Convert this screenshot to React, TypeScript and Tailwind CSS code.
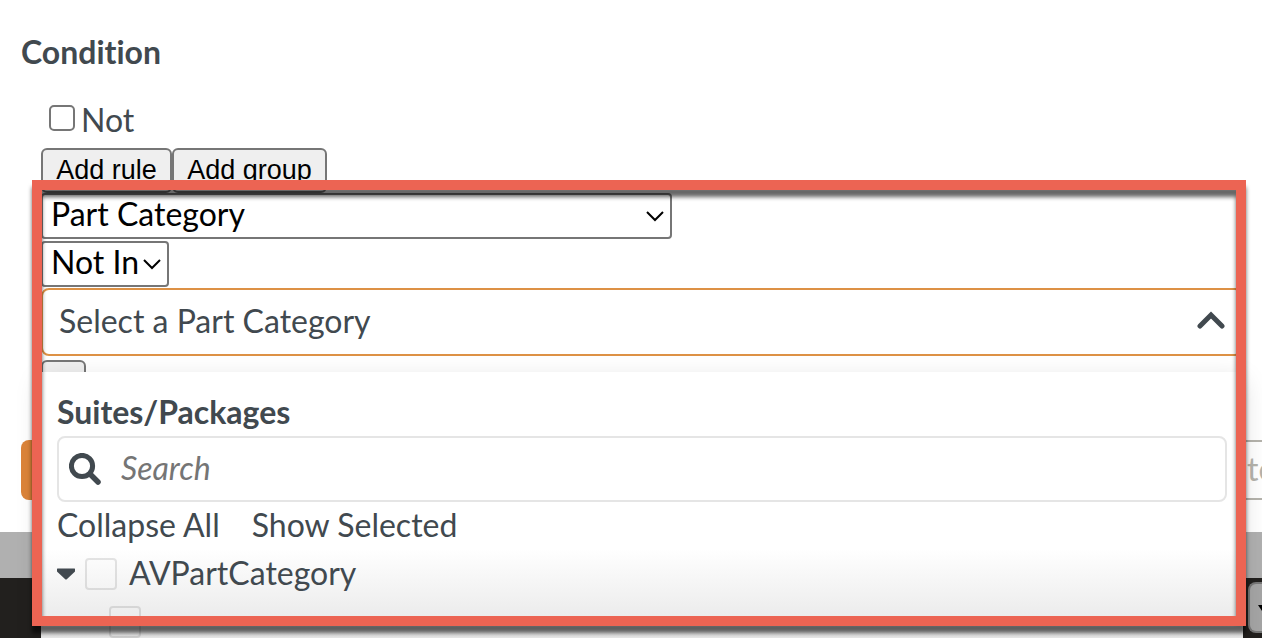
import { useState } from "react";

const categories = ["Part Category", "Part Number", "Manufacturer"];
const operators = ["Not In", "In"];

const Arrow = () => (
  <svg
    className="absolute right-[7px] top-[15px] w-5 h-4 pointer-events-none"
    viewBox="0 0 20 16"
    fill="none"
    stroke="black"
    strokeWidth="2"
  >
    <path d="M2 4 10 12 18 4" />
  </svg>
);

type SelectProps = {
  label: string;
  options: string[];
  className: string;
};

const RuleSelect = ({ label, options, className }: SelectProps) => {
  return (
    <div className={`relative ${className}`}>
      <select
        aria-label={label}
        className="block w-full h-[46px] pl-2 pb-1 leading-9 appearance-none rounded-sm border-2 border-[#767676] bg-white text-black"
      >
        {options.map((option) => (
          <option key={option}>{option}</option>
        ))}
      </select>
      <Arrow />
    </div>
  );
};

const TreeCheckbox = ({ label }: { label: string }) => (
  <input
    type="checkbox"
    aria-label={label}
    className="w-8 h-8 shrink-0 appearance-none rounded-sm border-2 border-black/10 checked:bg-gray-500"
  />
);

const CategoryPanel = () => {
  const [search, setSearch] = useState("");

  return (
    <div className="absolute inset-x-0 top-[84px] h-[272px] px-4 pt-5 bg-linear-to-b from-white from-65% to-[#e4e4e4] shadow-[0_8px_24px_rgba(0,0,0,0.15)]">
      <h3 className="font-bold leading-10">Suites/Packages</h3>
      <label className="flex items-center gap-5 h-[66px] mt-1 px-[10px] rounded-lg border-2 border-[#e5e5e5] bg-white">
        <svg className="w-8 h-8 shrink-0" viewBox="0 0 32 32" fill="none">
          <circle cx="13" cy="13" r="10.6" stroke="#41494f" strokeWidth="5" />
          <path
            d="M21.5 21.5 29 29"
            stroke="#41494f"
            strokeWidth="5.5"
            strokeLinecap="round"
          />
        </svg>
        <input
          type="text"
          aria-label="Search"
          placeholder="Search"
          value={search}
          onChange={(e) => setSearch(e.target.value)}
          className="grow pb-[2px] bg-transparent italic outline-none placeholder:text-[#757575]"
        />
      </label>
      <div className="flex items-start gap-8 h-12 leading-[46px]">
        <button>Collapse All</button>
        <button>Show Selected</button>
      </div>
      {/* TREE */}
      <div className="flex items-center h-12">
        <button aria-label="Toggle AVPartCategory" className="w-7">
          <svg className="w-[18px] h-3" viewBox="0 0 18 12">
            <path d="M0 1Q0 .5 .5 .5H17.5Q18 .5 18 1V3.5L9.8 11.2Q9 11.9 8.2 11.2L0 3.5Z" fill="#41494f" />
          </svg>
        </button>
        <TreeCheckbox label="AVPartCategory" />
        <span className="ml-3 pb-[2px]">AVPartCategory</span>
      </div>
      <div className="flex items-center h-12 pl-[52px]">
        <TreeCheckbox label="Subcategory" />
      </div>
    </div>
  );
};

export default function App() {
  return (
    <div className="relative flex flex-col h-screen overflow-hidden bg-[#b0b0b0] font-['Lato',sans-serif] text-[32px] text-[#41494f] [font-variant-ligatures:none]">
      {/* DIALOG */}
      <div className="h-[532px] shrink-0 pt-8 bg-white">
        <h2 className="px-[21px] font-bold leading-10">Condition</h2>
        <div className="relative z-10 pl-[41px] pr-[19px] mt-6">
          <label className="flex items-center gap-[6px] h-12 pl-2 mb-1 leading-10">
            <input
              type="checkbox"
              className="w-[26px] h-[26px] mb-1 appearance-none rounded-[5px] border-2 border-[#767676] bg-white checked:bg-blue-600"
            />
            Not
          </label>
          <div className="flex h-[45px] font-['Liberation_Sans',sans-serif] text-[27px] leading-9 text-black">
            <button className="w-[131px] pb-[2px] rounded-md border-2 border-[#767676] bg-[#efefef]">
              Add rule
            </button>
            <button className="w-[155px] pb-[2px] rounded-md border-2 border-[#767676] bg-[#efefef]">
              Add group
            </button>
          </div>
          <div className="flex flex-col gap-[2px]">
            <RuleSelect label="Field" options={categories} className="w-[631px]" />
            <RuleSelect label="Operator" options={operators} className="w-32" />
          </div>
          <div className="relative mt-[1px]">
            <button className="flex items-center justify-between w-full h-[68px] pl-4 pr-4 pb-[2px] rounded-lg border-2 border-[#dd9145] bg-white">
              Select a Part Category
              <svg className="w-7 h-5" viewBox="0 0 28 20" fill="none">
                <path
                  d="M3 15 14 4 25 15"
                  stroke="#41494f"
                  strokeWidth="5"
                  strokeLinecap="round"
                />
              </svg>
            </button>
            <button
              aria-label="Remove rule"
              className="block w-[45px] h-10 mt-1 rounded-md border-2 border-[#767676] bg-[#efefef]"
            />
            <CategoryPanel />
          </div>
        </div>
        {/* ACTIONS */}
        <div className="flex justify-between h-[60px] pl-[21px] mt-10">
          <button className="w-40 rounded-lg bg-[#dc8439] text-white">Save</button>
          <input
            type="text"
            aria-label="Note"
            placeholder="te"
            className="w-[26px] pl-[11px] pb-[2px] border-y-2 border-[#b5b3ac] placeholder:text-[#b5b3ac]"
          />
        </div>
      </div>
      <div className="flex justify-end items-start grow mt-[46px] pt-1 bg-[#22201e]">
        <button
          aria-label="More"
          className="flex items-center justify-end w-[14px] h-[51px] rounded-l-lg border-2 border-r-0 border-[#777] bg-[#a5a5a5]"
        >
          <svg className="w-1 h-3" viewBox="0 0 4 12">
            <path d="M0 3 4 3V9Z" fill="black" />
          </svg>
        </button>
      </div>
      {/* HIGHLIGHT */}
      <div className="absolute z-20 left-8 right-4 top-[180px] bottom-3 border-10 border-[#ec6453] drop-shadow-[0_7px_2px_rgba(0,0,0,0.6)] pointer-events-none" />
    </div>
  );
}
